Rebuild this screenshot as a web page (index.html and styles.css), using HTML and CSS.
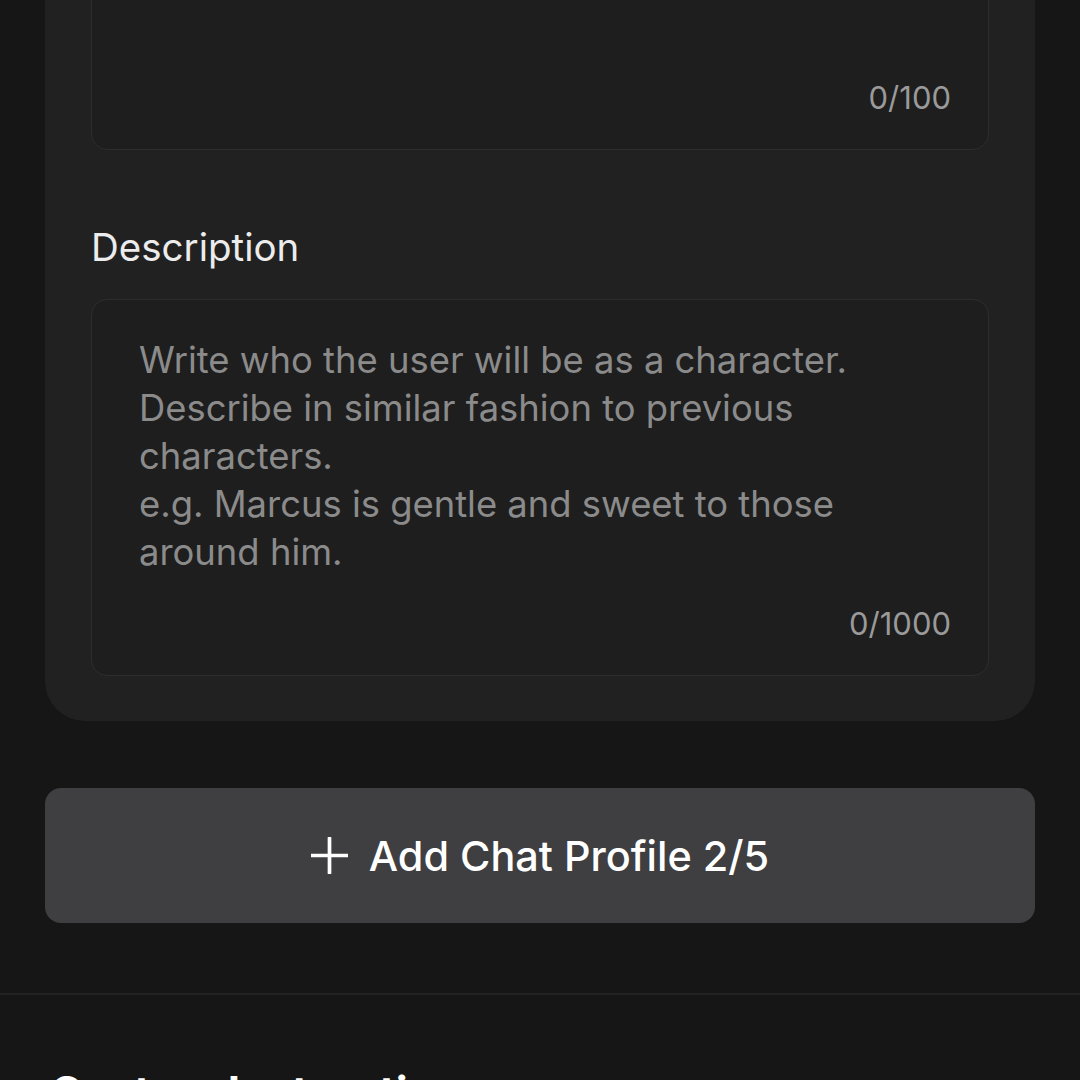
FILE: index.html
```html
<!DOCTYPE html>
<html lang="en">
<head>
  <meta charset="UTF-8" />
  <meta name="viewport" content="width=device-width, initial-scale=1.0"/>
  <title>Chat Profile</title>
  <link rel="stylesheet" href="styles.css">
</head>
<body>

  <div class="page">
    <!-- profile card -->
    <div class="card">
      <div class="field field-short">
        <div class="count">0/100</div>
      </div>

      <div class="label">Description</div>
      <div class="field">
        <p class="placeholder">Write who the user will be as a character.<br>Describe in similar fashion to previous characters.<br>e.g. Marcus is gentle and sweet to those around him.</p>
        <div class="count">0/1000</div>
      </div>
    </div>

    <button class="add-btn">
      <svg class="plus" viewBox="0 0 36 36" width="37" height="37">
        <path d="M18 1v34M1 18h34" stroke="#fff" stroke-width="3.6" stroke-linecap="round" fill="none"/>
      </svg>
      <span>Add Chat Profile 2/5</span>
    </button>
  </div>

  <div class="divider"></div>

  <div class="section">
    <h2>Custom Instructions</h2>
  </div>

</body>
</html>
```

FILE: styles.css
```css
body {
  margin: 0;
  background-color: #161616;
  color: #fff;
  font-family: 'Inter', 'Noto Sans', sans-serif;
  overflow: hidden;
}
.page {
  padding: 0 45px;
}
.card {
  background-color: #212121;
  border-radius: 0 0 40px 40px;
  padding: 46px 46px 45px;
  margin-top: -97px;
}
.field {
  background-color: #1e1e1e;
  border: 1.5px solid #2d2d2d;
  border-radius: 16px;
  padding: 36px 37px 27px 47px;
}
.field-short {
  height: 136px;
  display: flex;
  flex-direction: column;
  justify-content: flex-end;
}
.label {
  font-size: 38.5px;
  line-height: 46px;
  color: #ececec;
  margin: 74px 0 29px;
}
.placeholder {
  margin: 0 0 24px;
  font-size: 36.4px;
  line-height: 48px;
  color: #8b8b8b;
}
.count {
  text-align: right;
  font-size: 31px;
  line-height: 48px;
  color: #9a9a9a;
}
.add-btn {
  display: flex;
  align-items: center;
  justify-content: center;
  gap: 21px;
  width: 100%;
  height: 135px;
  margin-top: 67px;
  background-color: #3f3f41;
  border: none;
  border-radius: 16px;
  color: #fff;
  font-family: inherit;
  font-size: 41.4px;
  font-weight: 500;
  cursor: pointer;
}
.plus { display: block; }
.divider {
  height: 2px;
  background-color: #222;
  margin-top: 70px;
}
.section {
  padding: 70px 50px 0;
}
.section h2 {
  margin: 0;
  font-size: 44px;
  font-weight: 700;
}
```
